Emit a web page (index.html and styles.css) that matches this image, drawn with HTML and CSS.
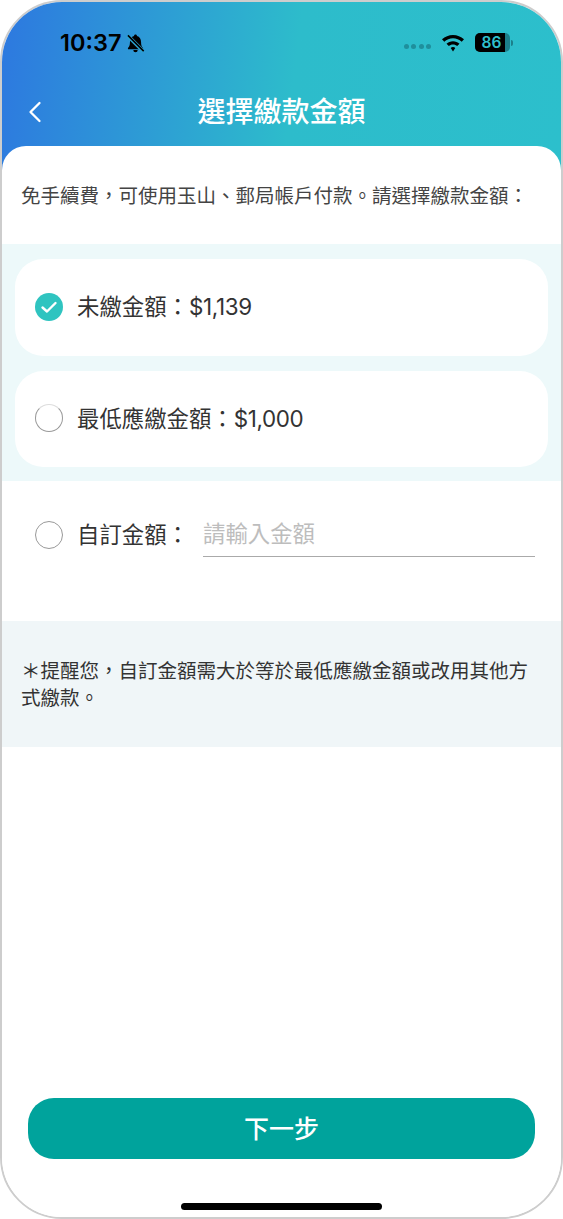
FILE: index.html
```html
<!DOCTYPE html>
<html lang="zh-Hant">
<head>
<meta charset="utf-8">
<title>選擇繳款金額</title>
<link rel="stylesheet" href="styles.css">
</head>
<body>
<div class="phone">
  <header class="header">
    <div class="status">
      <div class="status-left">
        <span class="time">10:37</span>
        <svg class="bell" viewBox="0 0 20 20" width="21" height="21"><path d="M10 1.500c-.8 0-1.400.6-1.400 1.300C6 3.500 4.700 5.700 4.700 8.700c0 2.900-.6 4.300-1.900 5.500v1.300h14.400v-1.300c-1.300-1.200-1.900-2.600-1.900-5.500 0-3-1.300-5.200-3.900-5.900 0-.7-.6-1.300-1.400-1.300zM7.900 16.300a2.100 2.100 0 0 0 4.200 0z" fill="#000"/><path d="M2.500 2.500l15 15" stroke="#2ba4d2" stroke-width="3.400"/><path d="M2.800 2.300l15 15" stroke="#000" stroke-width="1.500"/></svg>
      </div>
      <div class="status-right">
        <span class="dots"><i></i><i></i><i></i><i></i></span>
        <svg class="wifi" viewBox="0 0 24 18" width="24" height="18"><path d="M12 1C7.800 1 4 2.600 1 5.300l2.300 2.400C5.700 5.600 8.700 4.300 12 4.300s6.300 1.300 8.700 3.400L23 5.300C20 2.600 16.200 1 12 1zm0 6.200c-2.500 0-4.800.9-6.500 2.500l2.300 2.300c1.100-1 2.600-1.600 4.200-1.600s3.100.6 4.200 1.600l2.300-2.300c-1.700-1.600-4-2.500-6.500-2.500zm0 5.800c-.9 0-1.700.3-2.300.9L12 17.500l2.300-3.600c-.6-.6-1.400-.9-2.300-.9z" fill="#000"/></svg>
        <span class="battery"><span class="battery-level">86</span></span><span class="battery-cap"></span>
      </div>
    </div>
    <div class="nav">
      <svg class="back" viewBox="0 0 14 22" width="14" height="22"><path d="M11.500 2L2.500 11l9 9" fill="none" stroke="#fff" stroke-width="2.300" stroke-linecap="round" stroke-linejoin="round"/></svg>
      <h1 class="title">選擇繳款金額</h1>
    </div>
  </header>
  <main class="sheet">
    <p class="intro">免手續費，可使用玉山、郵局帳戶付款。請選擇繳款金額：</p>
    <section class="band">
      <div class="card">
        <svg class="radio" viewBox="0 0 28 28" width="28" height="28"><circle cx="14" cy="14" r="14" fill="#2fc4c0"/><path d="M7.500 14.500l4.500 4 8.500-8.500" fill="none" stroke="#fff" stroke-width="2.400" stroke-linecap="round" stroke-linejoin="round"/></svg>
        <span class="label">未繳金額：<span class="amount">$1,139</span></span>
      </div>
      <div class="card">
        <span class="circle circle-faint"></span>
        <span class="label">最低應繳金額：<span class="amount">$1,000</span></span>
      </div>
    </section>
    <div class="custom">
      <span class="circle"></span>
      <span class="label custom-label">自訂金額：</span>
      <span class="field">請輸入金額</span>
    </div>
    <p class="notice">＊提醒您，自訂金額需大於等於最低應繳金額或改用其他方式繳款。</p>
    <div class="footer">
      <button class="next">下一步</button>
      <div class="home"></div>
    </div>
  </main>
</div>
</body>
</html>
```
FILE: styles.css
```css
* { box-sizing: border-box; }
html, body { margin: 0; padding: 0; background: #fff; }
body { font-family: Inter, "Noto Sans CJK TC", sans-serif; color: #333; }
.phone {
  width: 563px; height: 1219px; border: 2px solid #cdcdcd; border-radius: 62px;
  overflow: hidden; display: flex; flex-direction: column; background: #fff;
}
.header { height: 168px; flex: none; margin-bottom: -24px; background: linear-gradient(97deg, #2d78e0 0%, #2dbccb 52%, #2cbfcc 100%); }
.status { height: 90px; display: flex; justify-content: space-between; align-items: flex-start; padding: 28px 48px 0 58px; }
.status-left { display: flex; align-items: center; gap: 2px; }
.time { font-size: 23.500px; font-weight: 600; color: #000; line-height: 26px; }
.bell { display: block; margin-left: 2px; }
.status-right { display: flex; align-items: center; padding-top: 3px; }
.dots { display: flex; gap: 2.500px; margin: 8px 10px 0 0; }
.dots i { width: 5px; height: 5px; border-radius: 50%; background: #1f8f9c; }
.wifi { display: block; margin-right: 10px; }
.battery { width: 35px; height: 19px; border-radius: 5px; background: #1c7f8a; overflow: hidden; display: block; }
.battery-level { display: block; width: 30px; height: 19px; background: #000; color: #2fc0cd; font-size: 15.500px; font-weight: 600; line-height: 19px; text-align: center; padding-left: 3px; }
.battery-cap { width: 2px; height: 6px; background: #1c7f8a; border-radius: 0 2px 2px 0; margin-left: 1px; }
.nav { position: relative; height: 40px; }
.back { position: absolute; left: 26px; top: 9px; }
.title { margin: 0; text-align: center; color: #fff; font-size: 28px; font-weight: 500; line-height: 40px; }
.sheet { flex: 1; position: relative; background: #fff; border-radius: 24px 24px 0 0; display: flex; flex-direction: column; min-height: 0; }
.intro { margin: 0; height: 98px; padding: 0 19px; font-size: 19.500px; line-height: 100px; color: #444; white-space: nowrap; }
.band { background: #edf9fa; padding: 15px 13px 14px; display: flex; flex-direction: column; gap: 15px; height: 237px; }
.card { height: 97px; background: #fff; border-radius: 28px; display: flex; align-items: center; padding: 0 0 2px 20px; gap: 14px; }
.card + .card { height: 96px; }
.radio { display: block; flex: none; }
.circle { width: 28px; height: 28px; border-radius: 50%; border: 1.500px solid #999; background: #fff; flex: none; display: block; }
.circle-faint { border-top-color: #ddd; }
.label { font-size: 22.400px; color: #333; white-space: nowrap; padding-bottom: 3px; }
.amount { letter-spacing: -.35px; }
.custom { height: 140px; display: flex; align-items: center; padding: 0 26px 32px 33px; }
.custom-label { margin-left: 14px; width: 126px; flex: none; padding-bottom: 4px; }
.field { flex: 1; height: 44px; line-height: 42px; border-bottom: 1px solid #aaa; font-size: 22.400px; color: #bdbdbd; }
.notice { margin: 0; height: 126px; background: #f0f6f8; padding: 37px 19px 0; font-size: 19.500px; line-height: 27px; color: #333; }
.footer { flex: 1; display: flex; flex-direction: column; align-items: center; justify-content: flex-end; padding-bottom: 7px; }
.next { width: 507px; height: 61px; border: 0; border-radius: 26px; background: #00a39c; color: #fff; font: 500 25px Inter, "Noto Sans CJK TC", sans-serif; margin-bottom: 44px; padding: 0 0 4px; }
.home { width: 201px; height: 7px; background: #000; border-radius: 4px; }
```
